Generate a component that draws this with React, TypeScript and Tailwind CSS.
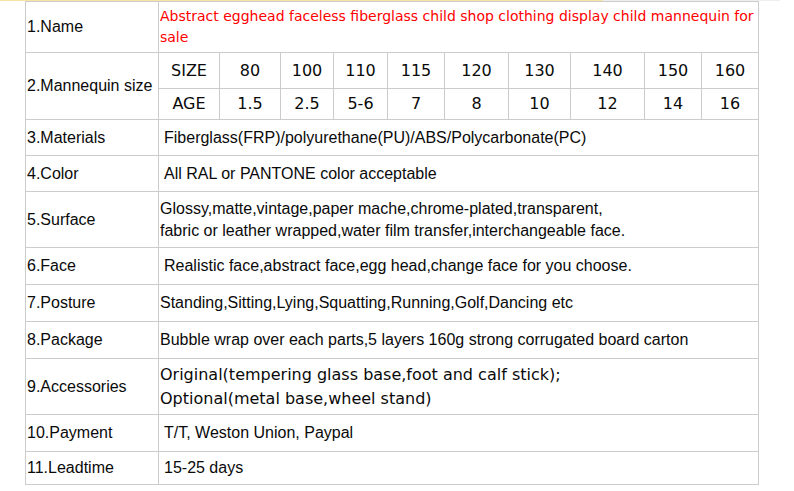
const arial = "font-['Liberation_Sans',Arial,sans-serif]";
const verdana = "font-['DejaVu_Sans',Verdana,sans-serif]";

const sizes = ["80", "100", "110", "115", "120", "130", "140", "150", "160"];
const ages = ["1.5", "2.5", "5-6", "7", "8", "10", "12", "14", "16"];

type Row = {
  label: string;
  content: React.ReactNode;
  indent?: boolean;
  font?: string;
};

const rows: Row[] = [
  {
    label: "3.Materials",
    content: "Fiberglass(FRP)/polyurethane(PU)/ABS/Polycarbonate(PC)",
    indent: true,
  },
  { label: "4.Color", content: "All RAL or PANTONE color acceptable", indent: true },
  {
    label: "5.Surface",
    content: (
      <span className="leading-[22px]">
        Glossy,matte,vintage,paper mache,chrome-plated,transparent,
        <br />
        fabric or leather wrapped,water film transfer,interchangeable face.
      </span>
    ),
  },
  {
    label: "6.Face",
    content: "Realistic face,abstract face,egg head,change face for you choose.",
    indent: true,
  },
  {
    label: "7.Posture",
    content: "Standing,Sitting,Lying,Squatting,Running,Golf,Dancing etc",
  },
  {
    label: "8.Package",
    content: "Bubble wrap over each parts,5 layers 160g strong corrugated board carton",
  },
  {
    label: "9.Accessories",
    font: verdana,
    content: (
      <span className="leading-[24px]">
        Original(tempering glass base,foot and calf stick);
        <br />
        Optional(metal base,wheel stand)
      </span>
    ),
  },
  { label: "10.Payment", content: "T/T, Weston Union, Paypal", indent: true },
  { label: "11.Leadtime", content: "15-25 days", indent: true },
];

const cell = "border-r border-b border-[#cccccc] flex items-center";

export default function App() {
  return (
    <div className="w-[794px] h-[491px] bg-white overflow-hidden">
      {/* leftover strip from the page above */}
      <div className="flex h-px">
        <div className="w-[603px] bg-[#f9e2a4]" />
        <div className="w-[177px] bg-[#eeeeee]" />
      </div>

      <div
        className={`ml-[25px] w-[734px] grid grid-cols-[133px_61px_61px_53px_54px_57px_64px_62px_74px_57px_57px] grid-rows-[51px_36px_31px_36px_36px_56px_37px_37px_37px_56px_37px_33px] border-l border-t border-[#cccccc] text-[16px] text-[#0a0a0a] ${arial}`}
      >
        {/* 1. Name */}
        <div className={`${cell} pl-[1px]`}>1.Name</div>
        <div className={`${cell} col-span-10 pl-[1px] text-[14px] leading-[21px] text-[#ff0000] ${verdana}`}>
          <span>
            Abstract egghead faceless fiberglass child shop clothing display child mannequin for
            <br />
            sale
          </span>
        </div>

        {/* 2. Mannequin size */}
        <div className={`${cell} row-span-2 pl-[1px]`}>2.Mannequin size</div>
        <div className={`${cell} justify-center ${verdana}`}>SIZE</div>
        {sizes.map((s) => (
          <div key={"s" + s} className={`${cell} justify-center ${verdana}`}>
            {s}
          </div>
        ))}
        <div className={`${cell} justify-center ${verdana}`}>AGE</div>
        {ages.map((a) => (
          <div key={"a" + a} className={`${cell} justify-center ${verdana}`}>
            {a}
          </div>
        ))}

        {rows.map((r) => (
          <div key={r.label} className="contents">
            <div className={`${cell} pl-[1px]`}>{r.label}</div>
            <div
              className={`${cell} col-span-10 ${r.indent ? "pl-[5px]" : "pl-[1px]"} ${r.font ?? ""}`}
            >
              {r.content}
            </div>
          </div>
        ))}
      </div>
    </div>
  );
}
